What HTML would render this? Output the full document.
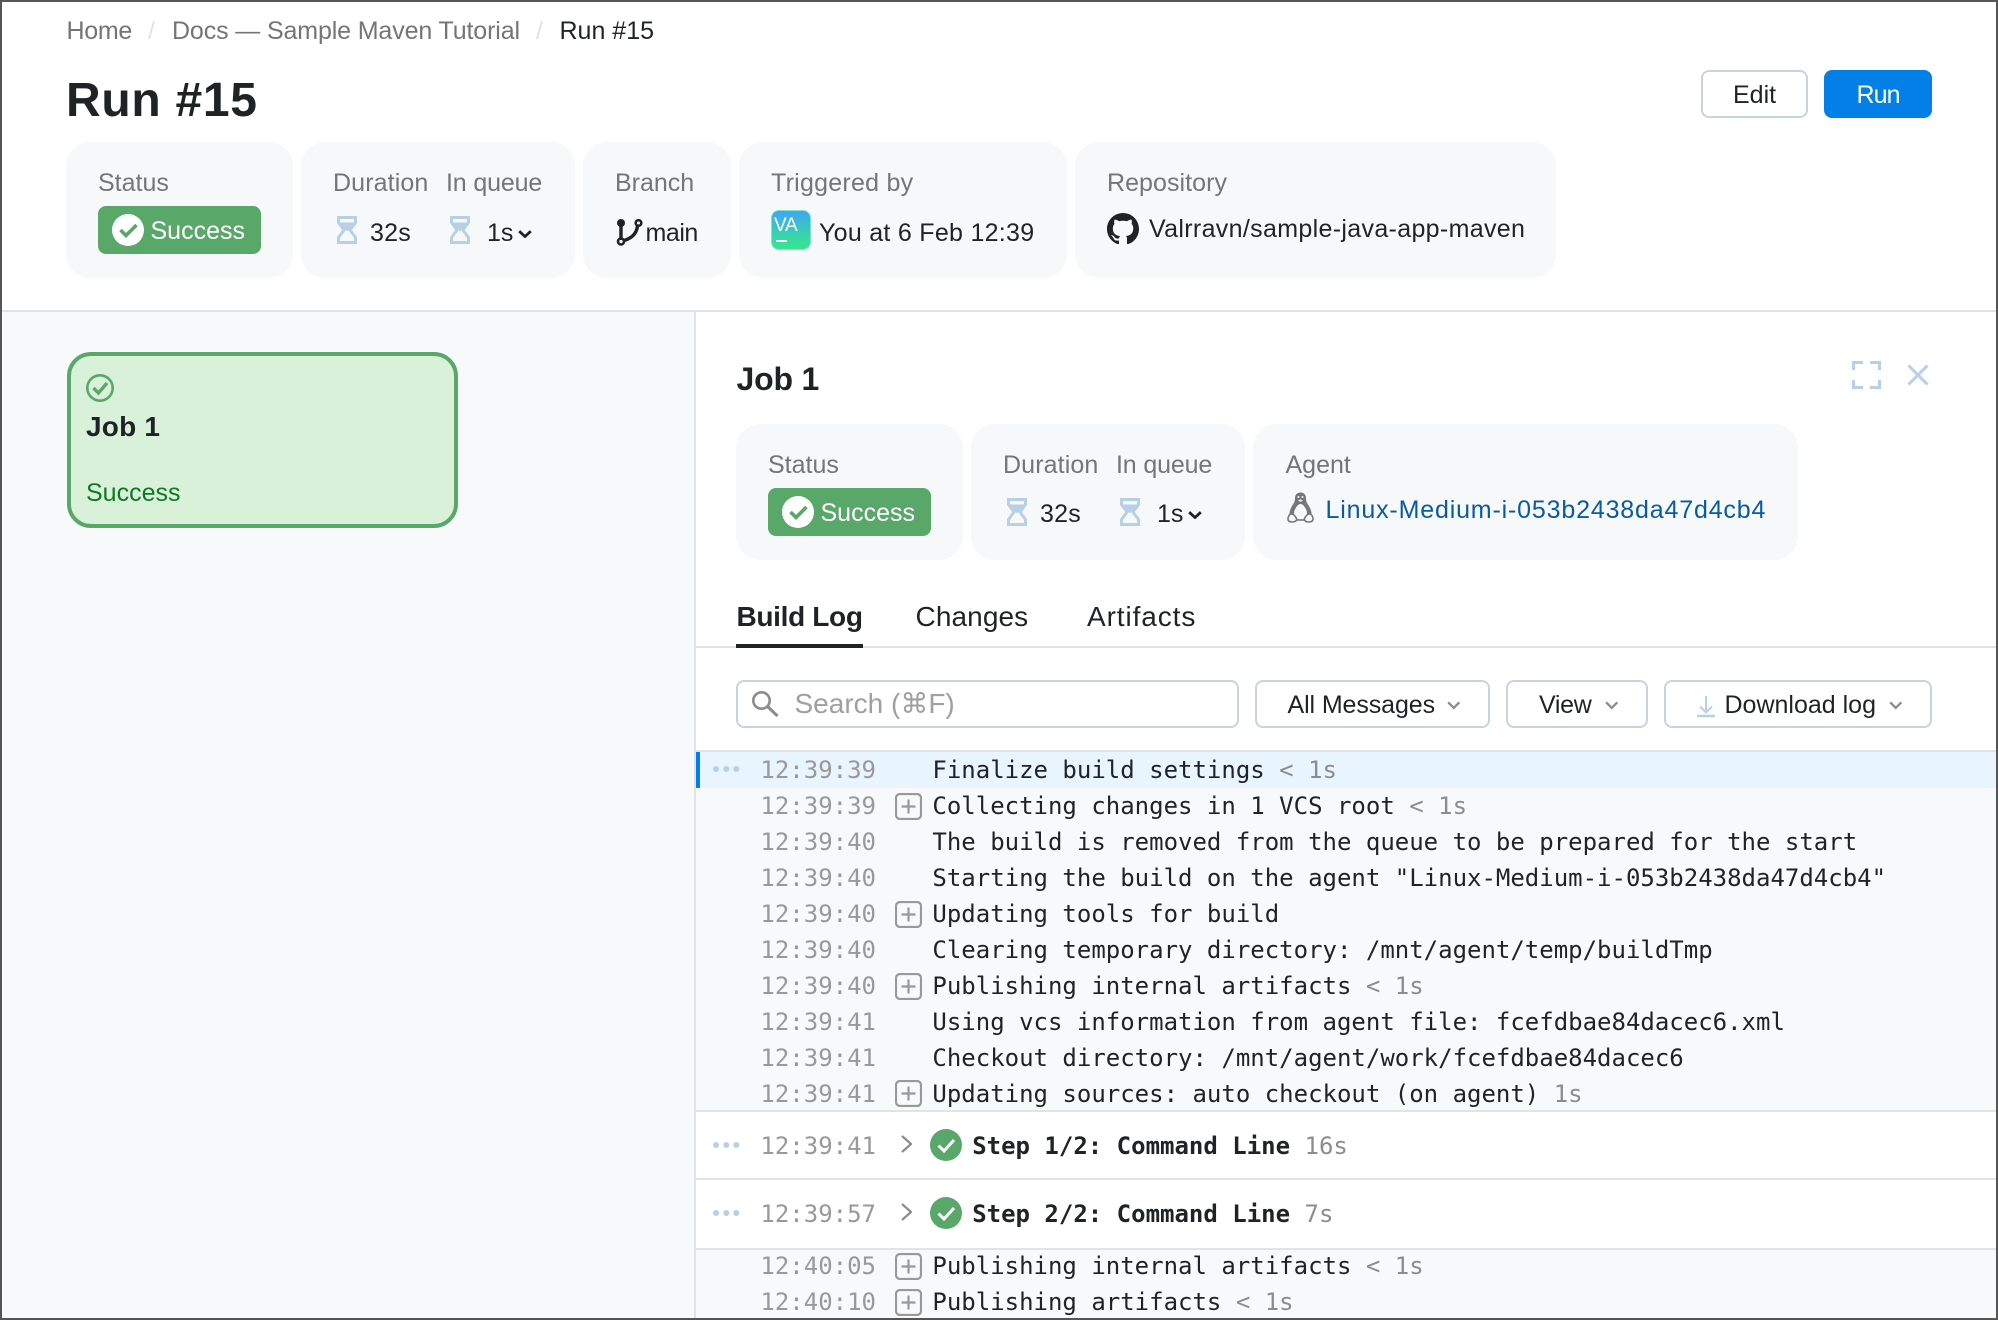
<!DOCTYPE html>
<html lang="en">
<head>
<meta charset="utf-8">
<title>Run #15</title>
<style>
*{box-sizing:border-box}
html,body{margin:0;padding:0;width:1998px;height:1320px;overflow:hidden;background:#fff}
body{position:relative;font-family:"Liberation Sans",sans-serif;color:#1f2326;font-size:25px}
.a{position:absolute}
.t{position:absolute;white-space:nowrap;line-height:40px;height:40px;font-size:25px}
.lb{color:#737577}
.card{position:absolute;background:#f7f8fa;border-radius:24px;top:142px;height:136px}
.card2{top:424px}
.badge{position:absolute;background:#59a869;border-radius:8px;width:163px;height:48px}
.btn{position:absolute;background:#fff;border:2px solid #c6d4e1;border-radius:8px;height:48px}
svg{position:absolute;display:block;overflow:visible}
.row{position:absolute;left:696px;width:1300px;height:36px;font-family:"DejaVu Sans Mono",monospace;font-size:24px;line-height:36px;white-space:pre}
.row span{position:absolute;top:0}
.tm{left:64.4px;color:#999}
.tx{left:236.4px;color:#1f2326}
.st{left:276.2px;font-weight:700;color:#1f2326}
.row span.g{position:static;color:#8c8c8c;font-weight:400}
.ln{position:absolute;background:#e0e4e9}
</style>
</head>
<body>
<svg width="0" height="0" style="position:absolute">
<defs>
<symbol id="hg" viewBox="0 0 20 28"><path d="M1.500 1.500H18.500V6.500L13 14l5.500 7.500v5H1.500v-5L7 14 1.500 6.500z" fill="none" stroke="#b8d0e6" stroke-width="3"/><path d="M2.500 6.500h15L10 15.500z" fill="#b8d0e6"/></symbol>
<symbol id="pl" viewBox="0 0 27 27"><rect x="1" y="1" width="25" height="25" rx="4" fill="none" stroke="#999" stroke-width="2.200"/><path d="M13.500 6.500v14M6.500 13.500h14" stroke="#999" stroke-width="2.200" fill="none"/></symbol>
<symbol id="dt" viewBox="0 0 28 6"><circle cx="3" cy="3" r="3" fill="#b8d0e6"/><circle cx="13.300" cy="3" r="3" fill="#b8d0e6"/><circle cx="23.300" cy="3" r="3" fill="#b8d0e6"/></symbol>
<symbol id="ck" viewBox="0 0 32 32"><circle cx="16" cy="16" r="16" fill="#fff"/><path d="M8.500 16l5.500 5.500L24.500 11" fill="none" stroke="#59a869" stroke-width="3.600"/></symbol>
<symbol id="gk" viewBox="0 0 32 32"><circle cx="16" cy="16" r="16" fill="#59a869"/><path d="M8.500 16.500l5.500 5.500L24 11" fill="none" stroke="#fff" stroke-width="3"/></symbol>
<symbol id="dk" viewBox="0 0 14 8"><path d="M1.200 1.200L7 6.500l5.800-5.300" fill="none" stroke="#1f2326" stroke-width="2.800"/></symbol>
<symbol id="gc" viewBox="0 0 14 9"><path d="M1.200 1.200L7 7l5.800-5.800" fill="none" stroke="#8c8c8c" stroke-width="2.400"/></symbol>
<symbol id="sc" viewBox="0 0 11 18"><path d="M1 1l9 8-9 8" fill="none" stroke="#8c8c8c" stroke-width="2.200"/></symbol>
</defs>
</svg>

<div class="t" style="left:66.500px;top:11px;color:#737577;letter-spacing:-.3px">Home</div>
<div class="t" style="left:148px;top:11px;color:#dfe3e8">/</div>
<div class="t" style="left:172px;top:11px;color:#737577;letter-spacing:-.13px">Docs — Sample Maven Tutorial</div>
<div class="t" style="left:536px;top:11px;color:#dfe3e8">/</div>
<div class="t" style="left:559.500px;top:11px;color:#1f2326">Run #15</div>

<div class="t" style="left:66px;top:70.500px;height:60px;line-height:60px;font-size:48px;font-weight:700;letter-spacing:.7px">Run #15</div>

<div class="btn" style="left:1701px;top:70px;width:107px"></div>
<div class="t" style="left:1733px;top:74.500px">Edit</div>
<div class="a" style="left:1824px;top:70px;width:108px;height:48px;background:#0280e8;border-radius:8px"></div>
<div class="t" style="left:1856.500px;top:74.500px;color:#fff;letter-spacing:-.9px">Run</div>

<div class="card" style="left:66px;width:227px"></div>
<div class="card" style="left:301px;width:274px"></div>
<div class="card" style="left:583px;width:148px"></div>
<div class="card" style="left:739px;width:328px"></div>
<div class="card" style="left:1075px;width:481px"></div>

<div class="t lb" style="left:98px;top:163px">Status</div>
<div class="badge" style="left:98px;top:206px"></div>
<svg style="left:112px;top:214px" width="32" height="32"><use href="#ck"/></svg>
<div class="t" style="left:150.500px;top:211px;color:#fff">Success</div>

<div class="t lb" style="left:333px;top:163px;letter-spacing:.12px">Duration</div>
<div class="t lb" style="left:446px;top:163px;letter-spacing:-.15px">In queue</div>
<svg style="left:337px;top:216px" width="20" height="28"><use href="#hg"/></svg>
<div class="t" style="left:370px;top:213px;letter-spacing:.2px">32s</div>
<svg style="left:450px;top:216px" width="20" height="28"><use href="#hg"/></svg>
<div class="t" style="left:487px;top:213px">1s</div>
<svg style="left:518px;top:230px" width="14" height="8"><use href="#dk"/></svg>

<div class="t lb" style="left:615px;top:163px">Branch</div>
<svg style="left:617px;top:219px" width="25" height="26" viewBox="0 0 25 26"><path d="M4 5v16" fill="none" stroke="#1f2326" stroke-width="3.400"/><circle cx="4" cy="4" r="4" fill="#1f2326"/><circle cx="4" cy="22.500" r="3" fill="none" stroke="#1f2326" stroke-width="2.600"/><circle cx="21.500" cy="4" r="2.800" fill="none" stroke="#1f2326" stroke-width="2.600"/><path d="M20.500 7C19.500 15 14 19.500 7 21.500" fill="none" stroke="#1f2326" stroke-width="3.400"/></svg>
<div class="t" style="left:645.500px;top:213px;letter-spacing:-.45px">main</div>

<div class="t lb" style="left:771px;top:163px;letter-spacing:.25px">Triggered by</div>
<div class="a" style="left:771px;top:210px;width:40px;height:40px;border-radius:8px;background:linear-gradient(180deg,#3fa5f7 0%,#37d9a4 70%,#35e68e 100%);border:1px solid #7fe3c4"></div>
<div class="t" style="left:774px;top:206px;font-size:19px;color:#fff;letter-spacing:-.3px">VA</div>
<div class="a" style="left:776px;top:240px;width:11px;height:2px;background:#fff"></div>
<div class="t" style="left:819px;top:213px;letter-spacing:.28px">You at 6 Feb 12:39</div>

<div class="t lb" style="left:1107px;top:163px;letter-spacing:.05px">Repository</div>
<svg style="left:1107px;top:213px" width="32" height="32" viewBox="0 0 16 16"><path fill="#1f2326" d="M8 0C3.580 0 0 3.580 0 8c0 3.540 2.290 6.530 5.470 7.590.4.070.55-.17.55-.38 0-.19-.01-.82-.01-1.490-2.010.37-2.530-.49-2.690-.94-.09-.23-.48-.94-.82-1.130-.28-.15-.68-.52-.01-.53.63-.01 1.080.58 1.230.82.72 1.210 1.870.87 2.330.66.07-.52.28-.87.51-1.070-1.780-.2-3.640-.89-3.640-3.950 0-.87.31-1.590.82-2.150-.08-.2-.36-1.020.08-2.120 0 0 .67-.21 2.200.82.64-.18 1.320-.27 2-.27.68 0 1.360.09 2 .27 1.530-1.040 2.200-.82 2.200-.82.44 1.100.16 1.920.08 2.120.51.56.82 1.270.82 2.150 0 3.070-1.870 3.750-3.650 3.950.29.25.54.73.54 1.480 0 1.070-.01 1.930-.01 2.200 0 .21.15.46.55.38A8.013 8.013 0 0016 8c0-4.420-3.580-8-8-8z"/></svg>
<div class="t" style="left:1149px;top:209px;letter-spacing:.33px">Valrravn/sample-java-app-maven</div>

<div class="ln" style="left:2px;top:310px;width:1994px;height:2px"></div>
<div class="a" style="left:2px;top:312px;width:692px;height:1006px;background:#f7f9fb"></div>
<div class="ln" style="left:694px;top:312px;width:2px;height:1006px"></div>

<div class="a" style="left:66.500px;top:352px;width:391.500px;height:176px;background:#d9f0d9;border:4px solid #59a869;border-radius:24px"></div>
<svg style="left:86px;top:374px" width="28" height="28" viewBox="0 0 28 28"><circle cx="14" cy="14" r="12.700" fill="none" stroke="#59a869" stroke-width="2.600"/><path d="M7.500 14l5 5L21 9" fill="none" stroke="#59a869" stroke-width="3.400"/></svg>
<div class="t" style="left:86px;top:407px;font-size:28px;font-weight:700;letter-spacing:.2px">Job 1</div>
<div class="t" style="left:86px;top:473px;color:#0b7a24">Success</div>

<div class="t" style="left:736.500px;top:359px;font-size:32px;font-weight:700;letter-spacing:-.2px">Job 1</div>
<svg style="left:1852px;top:361px" width="29" height="28" viewBox="0 0 29 28"><path d="M1.500 9V1.500H11M18 1.500h9.500V9M27.500 19v7.500H18M11 26.500H1.500V19" fill="none" stroke="#b8d0e6" stroke-width="3"/></svg>
<svg style="left:1907px;top:364px" width="22" height="22" viewBox="0 0 22 22"><path d="M1.500 1.500l19 19M20.500 1.500l-19 19" fill="none" stroke="#b8d0e6" stroke-width="3"/></svg>

<div class="card card2" style="left:736px;width:227px"></div>
<div class="card card2" style="left:971px;width:274px"></div>
<div class="card card2" style="left:1252.500px;width:545px"></div>

<div class="t lb" style="left:768px;top:445px">Status</div>
<div class="badge" style="left:768px;top:488px"></div>
<svg style="left:782px;top:496px" width="32" height="32"><use href="#ck"/></svg>
<div class="t" style="left:820.500px;top:493px;color:#fff">Success</div>

<div class="t lb" style="left:1003px;top:445px;letter-spacing:.12px">Duration</div>
<div class="t lb" style="left:1116px;top:445px;letter-spacing:-.15px">In queue</div>
<svg style="left:1007px;top:498px" width="20" height="28"><use href="#hg"/></svg>
<div class="t" style="left:1040px;top:494px;letter-spacing:.2px">32s</div>
<svg style="left:1120px;top:498px" width="20" height="28"><use href="#hg"/></svg>
<div class="t" style="left:1157px;top:494px">1s</div>
<svg style="left:1188px;top:511px" width="14" height="8"><use href="#dk"/></svg>

<div class="t lb" style="left:1285.500px;top:445px">Agent</div>
<svg style="left:1287px;top:492px" width="27" height="31" viewBox="0 0 27 31"><path d="M13.500.5C9.500.5 8 3 8 6.500c0 3.500-1.500 5-3 7.500-2 3.500-3 7-2.500 11h22c.5-4-.5-7.500-2.500-11-1.500-2.500-3-4-3-7.500C19 3 17.500.5 13.500.5z" fill="#777"/><path d="M13.500 12c-2.500 0-4.500 3-6 6.500-1 3-.5 6.500 1 9h10c1.500-2.500 2-6 1-9-1.500-3.500-3.500-6.500-6-6.500z" fill="#f7f8fa"/><circle cx="11.500" cy="5" r="1" fill="#fff"/><circle cx="15.500" cy="5" r="1" fill="#fff"/><path d="M11 8.500l2.500-1.200L16 8.500l-2.500 1.500z" fill="#e8e8e8"/><path d="M1 27c0-2.500 1.500-5 3.500-5S8.500 24.500 9.500 26.500c.8 2-1.500 3.500-4 3.500S1 29.500 1 27zM26 27c0-2.500-1.500-5-3.500-5s-4 2.500-5 4.500c-.8 2 1.500 3.500 4 3.500s4.500-.5 4.500-3z" fill="#f7f8fa" stroke="#777" stroke-width="1.600"/><path d="M9.500 28h8" stroke="#777" stroke-width="1.600" fill="none"/></svg>
<div class="t" style="left:1325.500px;top:490px;color:#0a5a9e;letter-spacing:.83px">Linux-Medium-i-053b2438da47d4cb4</div>

<div class="t" style="left:736.500px;top:597px;font-size:28px;font-weight:700;letter-spacing:-.33px">Build Log</div>
<div class="t" style="left:915.500px;top:597px;font-size:28px;letter-spacing:.1px">Changes</div>
<div class="t" style="left:1087px;top:597px;font-size:28px;letter-spacing:.9px">Artifacts</div>
<div class="ln" style="left:696px;top:646px;width:1300px;height:2px"></div>
<div class="a" style="left:736px;top:644px;width:127px;height:4px;background:#1f2326"></div>

<div class="btn" style="left:736px;top:680px;width:503px"></div>
<svg style="left:752px;top:691px" width="27" height="26" viewBox="0 0 27 26"><circle cx="9.500" cy="9.500" r="8.200" fill="none" stroke="#8c8c8c" stroke-width="2.600"/><path d="M15.500 15.500l10 9.500" fill="none" stroke="#8c8c8c" stroke-width="3"/></svg>
<div class="t" style="left:794.500px;top:684px;font-size:28px;color:#a0a0a0;font-family:'Liberation Sans','DejaVu Sans',sans-serif">Search (⌘F)</div>

<div class="btn" style="left:1255px;top:680px;width:234.500px"></div>
<div class="t" style="left:1287.500px;top:685px;letter-spacing:-.1px">All Messages</div>
<svg style="left:1447px;top:701px" width="13.500" height="9"><use href="#gc"/></svg>
<div class="btn" style="left:1506px;top:680px;width:142px"></div>
<div class="t" style="left:1539px;top:685px;letter-spacing:-.3px">View</div>
<svg style="left:1604.500px;top:701px" width="13.500" height="9"><use href="#gc"/></svg>
<div class="btn" style="left:1664px;top:680px;width:267.500px"></div>
<svg style="left:1697px;top:696px" width="18" height="22" viewBox="0 0 18 22"><path d="M9 0v16M3 10.500l6 6 6-6" fill="none" stroke="#b8d0e6" stroke-width="2"/><path d="M0 20h18" stroke="#b8d0e6" stroke-width="2.400"/></svg>
<div class="t" style="left:1724.500px;top:685px">Download log</div>
<svg style="left:1889px;top:701px" width="13.500" height="9"><use href="#gc"/></svg>

<div class="ln" style="left:696px;top:750px;width:1300px;height:2px"></div>
<div class="a" style="left:696px;top:752px;width:1300px;height:566px;background:#f7f9fb"></div>
<div class="a" style="left:696px;top:752px;width:1300px;height:36px;background:#e8f4fe"></div>
<div class="a" style="left:696px;top:752px;width:4px;height:36px;background:#0280e8"></div>

<svg style="left:713px;top:766px" width="28" height="6"><use href="#dt"/></svg>
<div class="row" style="top:752px"><span class="tm">12:39:39</span><span class="tx">Finalize build settings <span class="g">&lt; 1s</span></span></div>

<svg style="left:894.500px;top:793px" width="27" height="27"><use href="#pl"/></svg>
<div class="row" style="top:788px"><span class="tm">12:39:39</span><span class="tx">Collecting changes in 1 VCS root <span class="g">&lt; 1s</span></span></div>

<div class="row" style="top:824px"><span class="tm">12:39:40</span><span class="tx">The build is removed from the queue to be prepared for the start</span></div>

<div class="row" style="top:860px"><span class="tm">12:39:40</span><span class="tx">Starting the build on the agent "Linux-Medium-i-053b2438da47d4cb4"</span></div>

<svg style="left:894.500px;top:901px" width="27" height="27"><use href="#pl"/></svg>
<div class="row" style="top:896px"><span class="tm">12:39:40</span><span class="tx">Updating tools for build</span></div>

<div class="row" style="top:932px"><span class="tm">12:39:40</span><span class="tx">Clearing temporary directory: /mnt/agent/temp/buildTmp</span></div>

<svg style="left:894.500px;top:973px" width="27" height="27"><use href="#pl"/></svg>
<div class="row" style="top:968px"><span class="tm">12:39:40</span><span class="tx">Publishing internal artifacts <span class="g">&lt; 1s</span></span></div>

<div class="row" style="top:1004px"><span class="tm">12:39:41</span><span class="tx">Using vcs information from agent file: fcefdbae84dacec6.xml</span></div>

<div class="row" style="top:1040px"><span class="tm">12:39:41</span><span class="tx">Checkout directory: /mnt/agent/work/fcefdbae84dacec6</span></div>

<svg style="left:894.500px;top:1080px" width="27" height="27"><use href="#pl"/></svg>
<div class="row" style="top:1076px"><span class="tm">12:39:41</span><span class="tx">Updating sources: auto checkout (on agent) <span class="g">1s</span></span></div>

<div class="ln" style="left:696px;top:1110px;width:1300px;height:2px"></div>
<div class="a" style="left:696px;top:1112px;width:1300px;height:66px;background:#fff"></div>
<div class="ln" style="left:696px;top:1178px;width:1300px;height:2px"></div>
<div class="a" style="left:696px;top:1180px;width:1300px;height:68px;background:#fff"></div>
<div class="ln" style="left:696px;top:1248px;width:1300px;height:2px"></div>

<svg style="left:713px;top:1142px" width="28" height="6"><use href="#dt"/></svg>
<svg style="left:901px;top:1135px" width="11" height="18"><use href="#sc"/></svg>
<svg style="left:930px;top:1129px" width="32" height="32"><use href="#gk"/></svg>
<div class="row" style="top:1128px"><span class="tm">12:39:41</span><span class="st">Step 1/2: Command Line <span class="g">16s</span></span></div>

<svg style="left:713px;top:1210px" width="28" height="6"><use href="#dt"/></svg>
<svg style="left:901px;top:1203px" width="11" height="18"><use href="#sc"/></svg>
<svg style="left:930px;top:1197px" width="32" height="32"><use href="#gk"/></svg>
<div class="row" style="top:1196px"><span class="tm">12:39:57</span><span class="st">Step 2/2: Command Line <span class="g">7s</span></span></div>

<svg style="left:894.500px;top:1253px" width="27" height="27"><use href="#pl"/></svg>
<div class="row" style="top:1248px"><span class="tm">12:40:05</span><span class="tx">Publishing internal artifacts <span class="g">&lt; 1s</span></span></div>

<svg style="left:894.500px;top:1289px" width="27" height="27"><use href="#pl"/></svg>
<div class="row" style="top:1284px"><span class="tm">12:40:10</span><span class="tx">Publishing artifacts <span class="g">&lt; 1s</span></span></div>

<div class="a" style="left:0;top:0;width:1998px;height:1320px;border:2px solid #555;pointer-events:none"></div>
</body>
</html>
